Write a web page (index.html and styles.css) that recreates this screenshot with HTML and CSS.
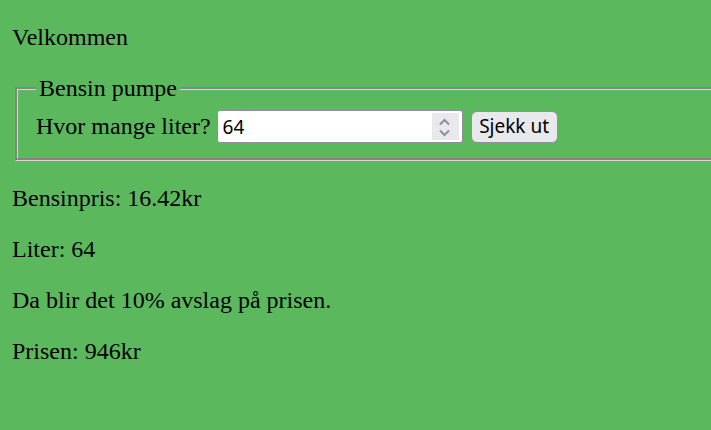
FILE: index.html
```html
<!DOCTYPE html>
<html lang="no">
<head>
<meta charset="utf-8">
<title>Bensin pumpe</title>
<link rel="stylesheet" href="styles.css">
</head>
<body>
<p>Velkommen</p>
<form class="pump-form">
  <fieldset class="pump">
    <legend class="pump-legend">Bensin pumpe</legend>
    <div class="row">
      <label class="row-label" for="liter">Hvor mange liter?</label>
      <span class="num">
        <input class="num-field" id="liter" type="text" value="64">
        <span class="spin">
          <svg width="27" height="27" viewBox="0 0 27 27" aria-hidden="true">
            <polyline points="8,11.5 12.5,7 17,11.5" fill="none" stroke="#8f8f9d" stroke-width="2"/>
            <polyline points="8,17.5 12.5,22 17,17.5" fill="none" stroke="#8f8f9d" stroke-width="2"/>
          </svg>
        </span>
      </span>
      <button class="btn" type="button">Sjekk ut</button>
    </div>
  </fieldset>
</form>
<p>Bensinpris: 16.42kr</p>
<p>Liter: 64</p>
<p>Da blir det 10% avslag på prisen.</p>
<p>Prisen: 946kr</p>
</body>
</html>
```
FILE: styles.css
```css
body {
  margin: 0 0 0 12px;
  background: #5cb85c;
  color: #000;
  font-family: "Liberation Serif", "Times New Roman", serif;
  font-size: 24px;
}
p {
  margin: 24px 0;
}
.pump-form {
  margin: 0;
}
.pump {
  margin: 0 0 0 3px;
  padding: 8.4px 18px 15px;
  border: 3px groove #d8d8d8;
  border-right: 0;
  min-width: 0;
}
.pump-legend {
  padding: 0 3px;
}
.row {
  display: flex;
  align-items: center;
}
.row-label {
  margin-right: 6px;
}
.num {
  display: flex;
  align-items: center;
  box-sizing: border-box;
  width: 246px;
  height: 33px;
  border: 1px solid #8f8f9d;
  border-radius: 3px;
  background: #fff;
  padding: 0 3px 0 5px;
}
.num-field {
  flex: 1;
  min-width: 0;
  border: 0;
  outline: 0;
  padding: 0;
  margin: 0;
  background: transparent;
  font-family: "Noto Sans", "Open Sans", sans-serif;
  font-size: 19px;
  color: #000;
}
.spin {
  display: block;
  width: 27px;
  height: 27px;
  background: #e9e9ed;
}
.spin svg {
  display: block;
}
.btn {
  margin: 0 0 0 8px;
  box-sizing: border-box;
  width: 87px;
  height: 32px;
  padding: 0 7px;
  border: 1px solid #8f8f9d;
  border-radius: 6px;
  background: #e9e9ed;
  color: #000;
  font-family: "Noto Sans", "Open Sans", sans-serif;
  font-size: 19px;
  line-height: 1;
}
```
